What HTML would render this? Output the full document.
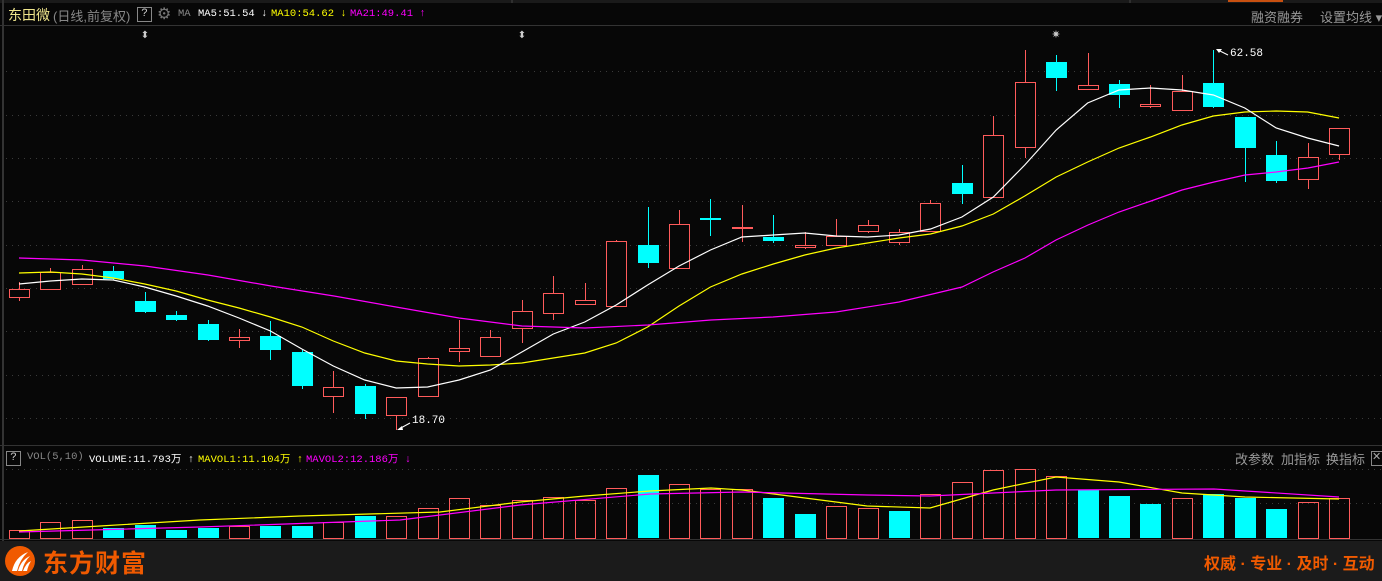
<!DOCTYPE html>
<html><head><meta charset="utf-8">
<style>
html,body{margin:0;padding:0;background:#070707;width:1382px;height:581px;overflow:hidden;font-family:"Liberation Mono","Noto Sans CJK SC",monospace;}
#wrap{position:relative;width:1382px;height:581px;}
.t{position:absolute;white-space:nowrap;font-size:12px;}
.cn{font-family:"Liberation Sans","Noto Sans CJK SC",sans-serif;}
.m{font-family:"Liberation Mono","Noto Sans CJK SC",monospace;}
#bot{position:absolute;left:0;top:541px;width:1382px;height:40px;background:#1b1b1b;}
</style></head><body><div id="wrap">
<svg id="s" width="1382" height="581" style="position:absolute;left:0;top:0"></svg>
<div class="t cn" style="left:8px;top:5px;font-size:14px;color:#f0e68c">东田微</div>
<div class="t cn" style="left:53px;top:6px;color:#888;font-size:13px">(日线,前复权)</div>
<div class="t" style="left:137px;top:7px;width:13px;height:13px;border:1px solid #888;color:#ccc;font-size:11px;text-align:center;line-height:13px">?</div>
<div class="t" style="left:157px;top:4px;color:#777;font-size:16px">⚙</div>
<div class="t m" style="left:178px;top:8px;color:#888;font-size:10.5px">MA</div>
<div class="t m" style="left:198px;top:8px;color:#fff;font-size:10.5px">MA5:51.54 ↓</div>
<div class="t m" style="left:271px;top:8px;color:#ff0;font-size:10.5px">MA10:54.62 ↓</div>
<div class="t m" style="left:350px;top:8px;color:#f0f;font-size:10.5px">MA21:49.41 ↑</div>
<div class="t cn" style="left:1251px;top:7px;color:#999;font-size:13px">融资融券</div>
<div class="t cn" style="left:1320px;top:7px;color:#999;font-size:13px">设置均线 ▾</div>
<div class="t m" style="left:1230px;top:48px;color:#fff;font-size:11px">62.58</div>
<div class="t m" style="left:412px;top:415px;color:#fff;font-size:11px">18.70</div>
<div class="t" style="left:6px;top:451px;width:13px;height:13px;border:1px solid #888;color:#ccc;font-size:11px;text-align:center;line-height:13px">?</div>
<div class="t m" style="left:27px;top:451px;color:#888;font-size:10.5px">VOL(5,10)</div>
<div class="t m" style="left:89px;top:451px;color:#fff;font-size:10.5px">VOLUME:11.793万 ↑</div>
<div class="t m" style="left:198px;top:451px;color:#ff0;font-size:10.5px">MAVOL1:11.104万 ↑</div>
<div class="t m" style="left:306px;top:451px;color:#f0f;font-size:10.5px">MAVOL2:12.186万 ↓</div>
<div class="t cn" style="left:1235px;top:449px;color:#999;font-size:13px">改参数</div>
<div class="t cn" style="left:1281px;top:449px;color:#999;font-size:13px">加指标</div>
<div class="t cn" style="left:1326px;top:449px;color:#999;font-size:13px">换指标</div>
<div class="t" style="left:1371px;top:451px;width:11px;height:13px;border:1px solid #888;color:#aaa;font-size:11px;line-height:13px">✕</div>
<div id="bot">
<svg width="40" height="40" style="position:absolute;left:3px;top:4px"><circle cx="17" cy="16" r="15" fill="#f05a00"/><path d="M9 26 Q12 12 25 7 Q17 14 14 26Z M15 26 Q18 15 27 11 Q21 17 19 26Z M20 26 Q23 18 28 16 Q25 21 24 26Z" fill="#fff"/></svg>
<div class="t cn" style="left:43px;top:3px;font-size:25px;font-weight:bold;color:#f05a00;letter-spacing:1px">东方财富</div>
<div class="t cn" style="left:1204px;top:9px;font-size:16px;font-weight:bold;color:#f05a00">权威 · 专业 · 及时 · 互动</div>
</div>
</div>
<script>
var s=document.getElementById('s'),h='';
h+='<rect x="0" y="0" width="1382" height="3" fill="#1a1a1a"/><line x1="512" y1="0" x2="512" y2="3" stroke="#444"/><line x1="1130" y1="0" x2="1130" y2="3" stroke="#444"/><rect x="1228" y="0" width="55" height="2" fill="#c85010"/>';
h+='<line x1="3" y1="0" x2="3" y2="541" stroke="#333" stroke-width="2"/>';
h+='<line x1="0" y1="25.5" x2="1382" y2="25.5" stroke="#333"/><line x1="0" y1="445.5" x2="1382" y2="445.5" stroke="#333"/><line x1="0" y1="539.5" x2="1382" y2="539.5" stroke="#333"/>';
[71,115,158,201,245,288,331,375,418].forEach(function(y){h+='<line x1="6" y1="'+y+'.5" x2="1382" y2="'+y+'.5" stroke="#3a3a3a" stroke-dasharray="1,5"/>';});
[469,503].forEach(function(y){h+='<line x1="6" y1="'+y+'.5" x2="1382" y2="'+y+'.5" stroke="#3a3a3a" stroke-dasharray="1,5"/>';});
var C=[[1,289,297,282,301],[1,272,289,268,290],[1,269,284,265,285],[0,271,279,266,280],[0,301,312,292,313],[0,315,320,311,321],[0,324,340,320,341],[1,337,340,329,348],[0,336,350,321,360],[0,352,386,350,389],[1,387,396,371,413],[0,386,414,384,419],[1,397,415,415,430],[1,358,396,357,397],[1,348,351,320,362],[1,337,356,330,357],[1,311,328,300,343],[1,293,313,276,320],[1,300,304,283,305],[1,241,306,240,307],[0,245,263,207,268],[1,224,268,210,269],[0,218,220,199,236],[1,227,228,205,242],[0,237,241,215,243],[1,245,247,232,249],[1,236,245,219,246],[1,225,231,220,233],[1,232,242,229,245],[1,203,231,200,232],[0,183,194,165,204],[1,135,197,116,198],[1,82,147,50,158],[0,62,78,55,91],[1,85,89,53,90],[0,84,95,80,108],[1,104,106,85,108],[1,91,110,75,111],[0,83,107,50,108],[0,117,148,117,182],[0,155,181,141,183],[1,157,179,143,189],[1,128,154,128,160]];
var V=[[1,530],[1,522],[1,520],[0,528],[0,525],[0,530],[0,528],[1,526],[0,526],[0,526],[1,522],[0,516],[1,516],[1,508],[1,498],[1,505],[1,500],[1,497],[1,500],[1,488],[0,475],[1,484],[1,489],[1,489],[0,498],[0,514],[1,506],[1,508],[0,511],[1,494],[1,482],[1,470],[1,469],[1,476],[0,490],[0,496],[0,504],[1,498],[0,494],[0,498],[0,509],[1,502],[1,498]];
function X(i){return 19+i*31.43;}
var RED='#ff5b5b',CY='#00ffff';
C.forEach(function(c,i){var x=Math.round(X(i));var col=c[0]==0?CY:RED;
h+='<line x1="'+(x+.5)+'" y1="'+c[3]+'" x2="'+(x+.5)+'" y2="'+c[4]+'" stroke="'+col+'"/>';
var hgt=Math.max(c[2]-c[1],1);
if(c[0]==0)h+='<rect x="'+(x-10)+'" y="'+c[1]+'" width="21" height="'+hgt+'" fill="'+col+'"/>';
else h+='<rect x="'+(x-9.5)+'" y="'+(c[1]+.5)+'" width="20" height="'+hgt+'" fill="#070707" stroke="'+col+'"/>';});
V.forEach(function(v,i){var x=Math.round(X(i));var col=v[0]==0?CY:RED;
if(v[0]==0)h+='<rect x="'+(x-10)+'" y="'+v[1]+'" width="21" height="'+(538-v[1])+'" fill="'+col+'"/>';
else h+='<rect x="'+(x-9.5)+'" y="'+(v[1]+.5)+'" width="20" height="'+(538-v[1])+'" fill="none" stroke="'+col+'"/>';});
function pl(a,col){h+='<polyline fill="none" stroke="'+col+'" stroke-width="1.2" points="'+a.join(' ')+'"/>';}
var w=[284,281,279,280,287,296,306,318,331,349,366,380,388,387,380,370,352,334,322,305,285,266,250,237,235,233,236,237,235,229,217,197,165,130,103,90,88,90,95,108,128,138,146];
var y=[273,272,274,278,284,291,300,308,317,327,341,353,361,364,366,365,363,358,353,343,327,306,287,274,264,255,248,243,238,234,226,214,196,177,162,148,137,125,116,112,111,112,118];
pl(y.map(function(v,i){return X(i)+','+v;}),'#ffff00');
pl(w.map(function(v,i){return X(i)+','+v;}),'#ffffff');
pl(['19,258','82,260','145,266','208,275','271,286','334,296','396,307','459,318','522,326','585,328','648,325','711,320','773,317','836,312','899,302','962,287','993,272','1025,258','1056,240','1088,225','1119,212','1151,201','1182,190','1214,182','1245,175','1276,172','1308,168','1339,162'],'#ff00ff');
pl(['19,531','100,526','200,520','300,516','440,512','520,502','585,496','650,491','711,488','742,490','805,498','867,506','930,508','993,490','1056,477','1119,482','1182,493','1245,497','1339,499'],'#ffff00');
pl(['19,532','200,527','400,520','520,505','650,494','742,492','867,495','930,496','1056,490','1214,489','1339,497'],'#ff00ff');
h+='<polyline points="1228,55 1218,50" stroke="#fff" fill="none"/><path d="M1216 49 l6 0 l-3 4z" fill="#fff"/>';
h+='<polyline points="410,423 399,429" stroke="#fff" fill="none"/><path d="M397 430 l5 -4 l1 4z" fill="#fff"/>';
[145,522].forEach(function(x){h+='<text x="'+x+'" y="38" fill="#ccc" font-size="10" text-anchor="middle">⬍</text>';});
h+='<text x="1056" y="38" fill="#ccc" font-size="11" text-anchor="middle">✷</text>';
s.innerHTML=h;
</script>
</body></html>
